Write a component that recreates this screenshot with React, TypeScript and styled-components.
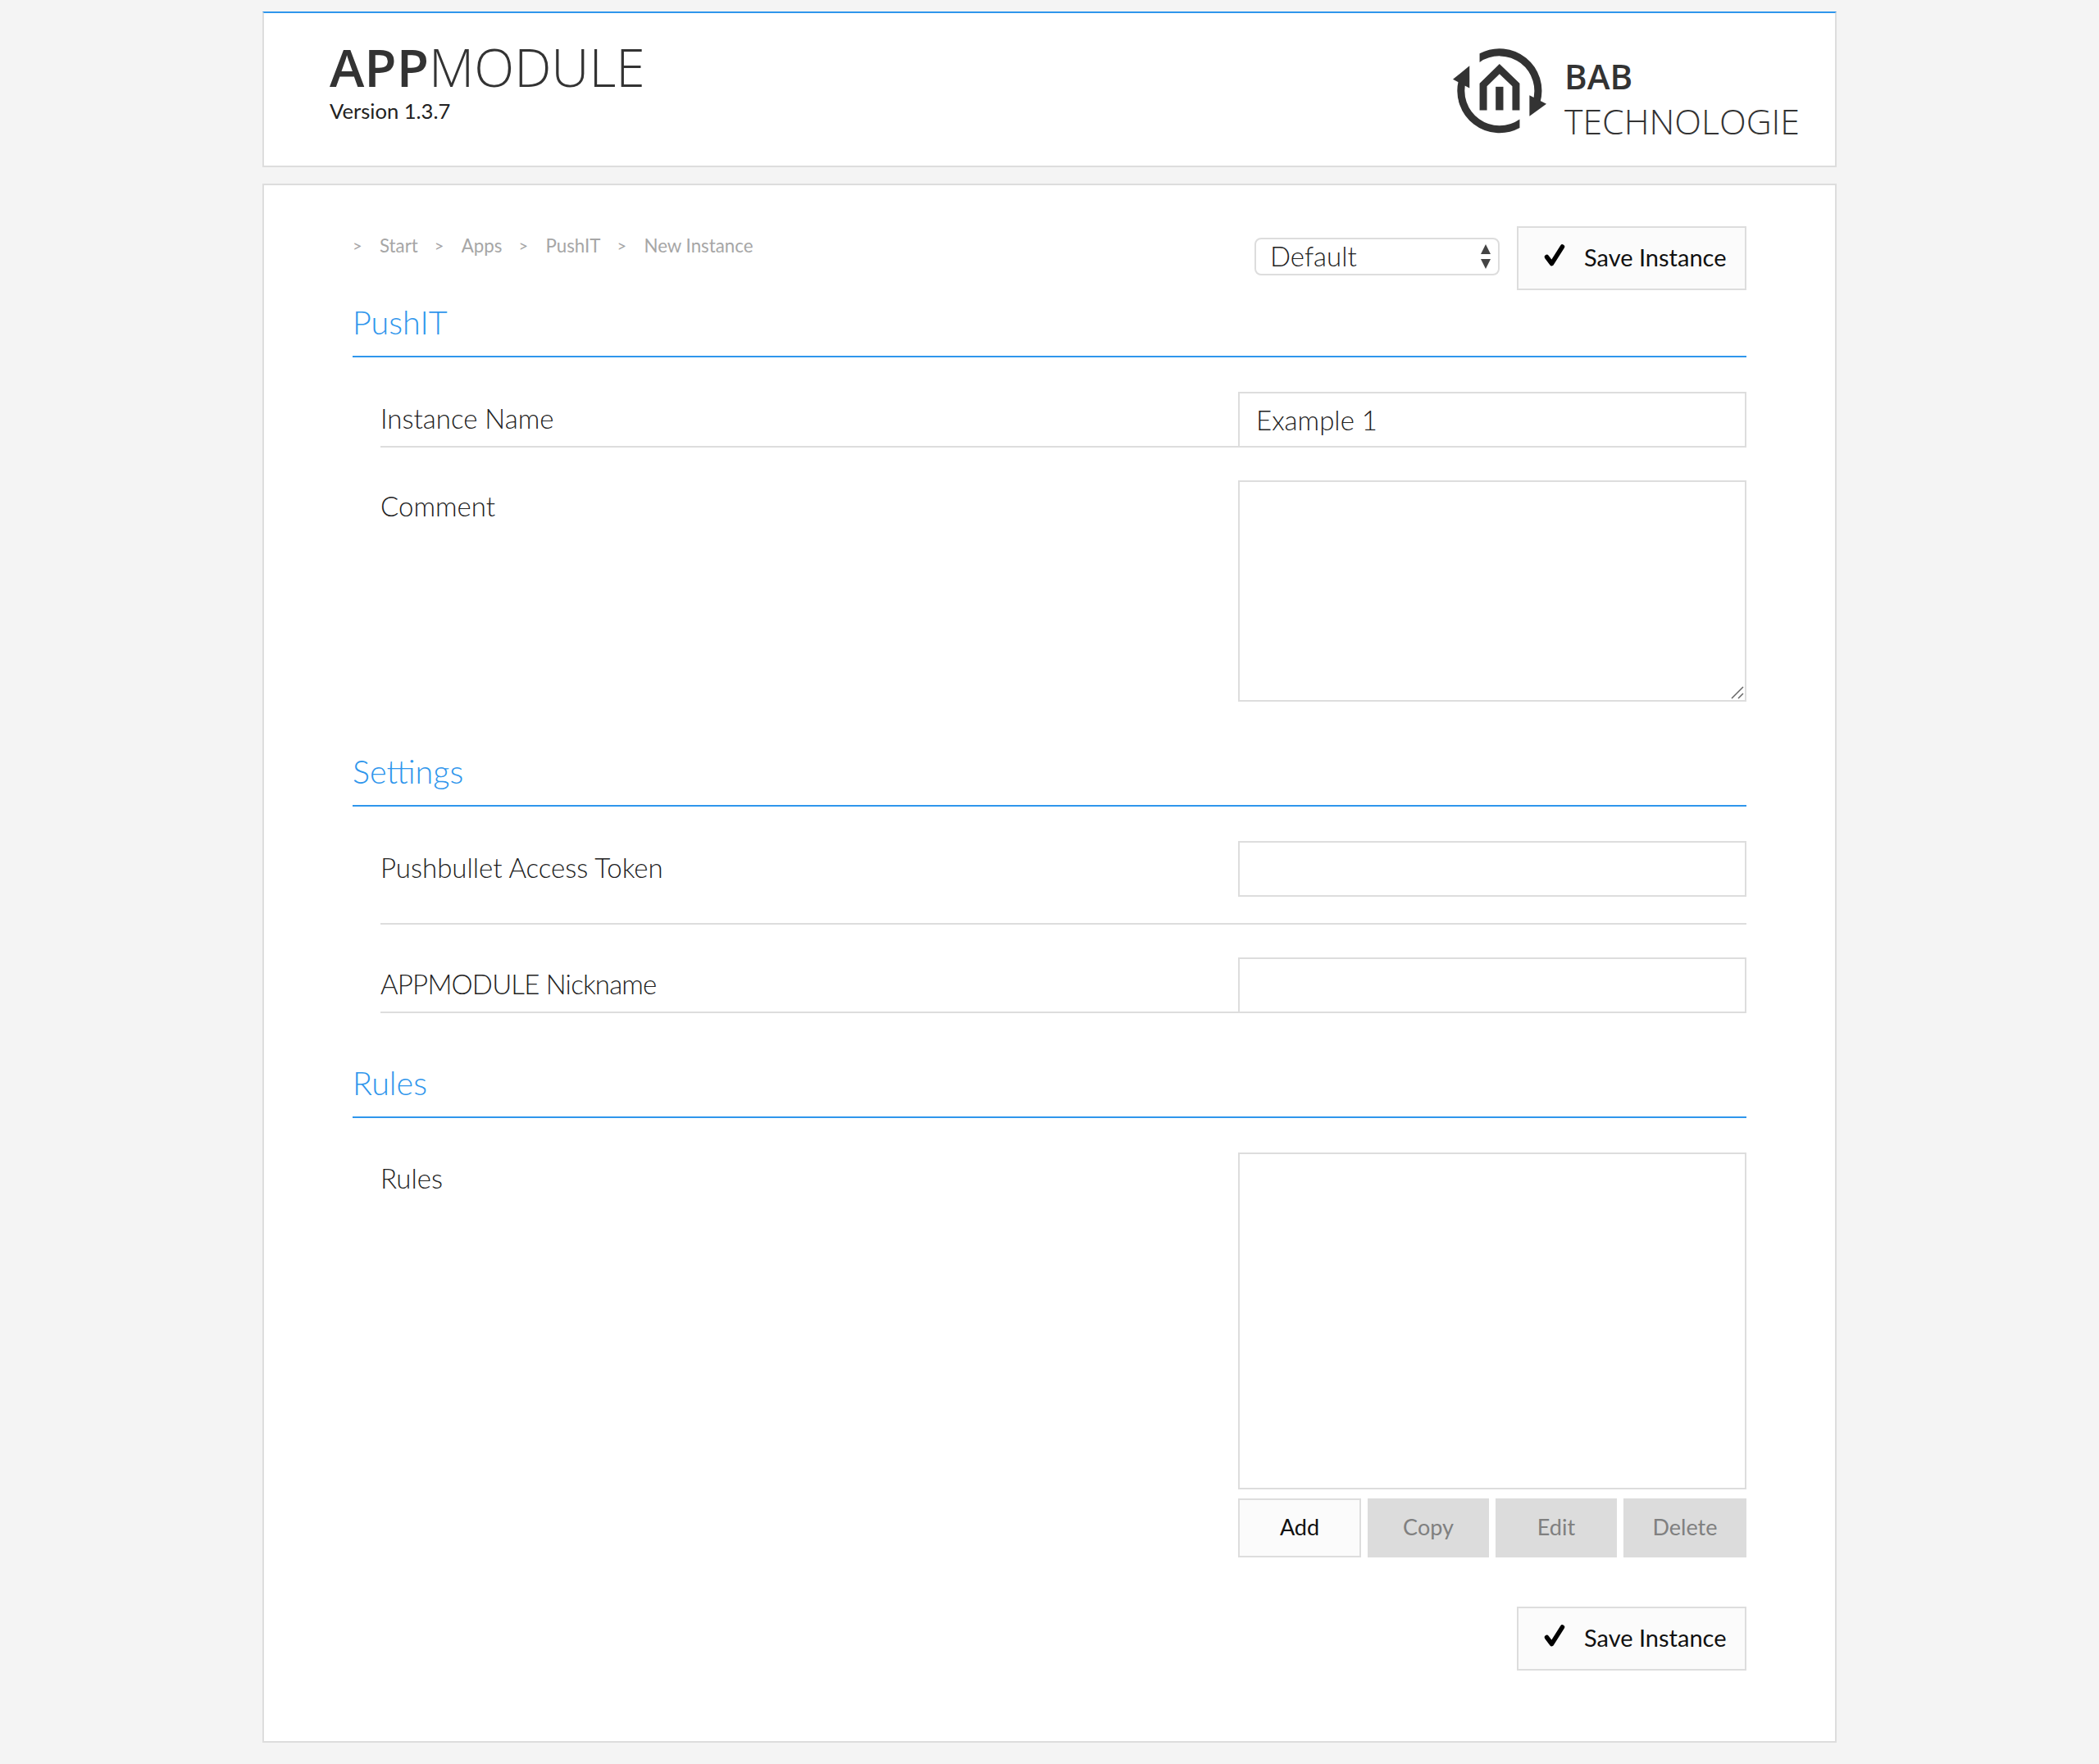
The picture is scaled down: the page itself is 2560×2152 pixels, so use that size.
import React from 'react';
import styled, { createGlobalStyle } from 'styled-components';

const UI_FONT = '"Lato", "Roboto", "Liberation Sans", sans-serif';
const LOGO_FONT = '"Open Sans", "Liberation Sans", sans-serif';
const BLUE = '#2f96ec';
const LINE = '#dddddd';

const GlobalStyle = createGlobalStyle`
  html, body {
    margin: 0;
    padding: 0;
    background: #f4f4f4;
  }
  body {
    font-family: ${UI_FONT};
    font-weight: 300;
    color: #333;
  }
  * {
    box-sizing: border-box;
  }
`;

const Check: React.FC = () => (
  <CheckIcon viewBox="0 0 26 27" aria-hidden="true">
    <path d="M3.5 15.5 L9.5 23.5 L22.5 3" fill="none" stroke="#000" strokeWidth="5.5" strokeLinecap="round" strokeLinejoin="round" />
  </CheckIcon>
);

const Logo: React.FC = () => (
  <LogoMark viewBox="97 87 343 311" aria-hidden="true">
    <path d="M195 105 A155 155 0 0 1 417 285 L388.5 285 A128 128 0 0 0 195 137 Z" />
    <path d="M342 378 A155 155 0 0 1 117.5 205 L145.5 205 A128 128 0 0 0 342 346 Z" />
    <polygon points="158,150 97,200 158,232" />
    <polygon points="378,258 440,290 378,335" />
    <polygon points="268,143 342,215 342,313 315,313 315,225 268,180 222,225 222,313 195,313 195,215" />
    <rect x="254" y="227" width="28" height="86" />
  </LogoMark>
);

const SaveButton: React.FC = () => (
  <SaveBtn type="button">
    <Check />
    <span>Save Instance</span>
  </SaveBtn>
);

const App: React.FC = () => {
  const crumbs = ['Start', 'Apps', 'PushIT', 'New Instance'];

  return (
    <>
      <GlobalStyle />
      <Page>
        <Header>
          <div>
            <Title>
              <b>APP</b>MODULE
            </Title>
            <Version>Version 1.3.7</Version>
          </div>
          <Brand>
            <Logo />
            <BrandText>
              <b>BAB</b>
              <span>TECHNOLOGIE</span>
            </BrandText>
          </Brand>
        </Header>

        <Main>
          <TopBar>
            <Crumbs>
              {crumbs.map((c) => (
                <React.Fragment key={c}>
                  <Sep>&gt;</Sep>
                  <Crumb>{c}</Crumb>
                </React.Fragment>
              ))}
            </Crumbs>
            <TopActions>
              <SelectWrap>
                <Select defaultValue="Default">
                  <option>Default</option>
                </Select>
                <SelectArrows viewBox="0 0 12 30" aria-hidden="true">
                  <polygon points="6,0 12,12 0,12" />
                  <polygon points="0,18 12,18 6,30" />
                </SelectArrows>
              </SelectWrap>
              <SaveButton />
            </TopActions>
          </TopBar>

          <Heading>PushIT</Heading>
          <Row $line>
            <Label>Instance Name</Label>
            <TextInput defaultValue="Example 1" />
          </Row>
          <Row>
            <Label $top>Comment</Label>
            <AreaWrap>
              <TextArea />
              <Grip viewBox="0 0 18 18" aria-hidden="true">
                <path d="M2 16 L16 2 M10 16 L16 10" />
              </Grip>
            </AreaWrap>
          </Row>

          <Heading $spaced>Settings</Heading>
          <Row $line $pad>
            <Label>Pushbullet Access Token</Label>
            <TextInput />
          </Row>
          <Row $line>
            <Label $tight>APPMODULE Nickname</Label>
            <TextInput />
          </Row>

          <Heading $spaced>Rules</Heading>
          <Row>
            <Label $top>Rules</Label>
            <div>
              <RulesList />
              <RuleButtons>
                <RuleBtn type="button">Add</RuleBtn>
                <RuleBtn type="button" $off>Copy</RuleBtn>
                <RuleBtn type="button" $off>Edit</RuleBtn>
                <RuleBtn type="button" $off>Delete</RuleBtn>
              </RuleButtons>
            </div>
          </Row>

          <Footer>
            <SaveButton />
          </Footer>
        </Main>
      </Page>
    </>
  );
};

export default App;

// page
const Page = styled.div`
  width: 1920px;
  margin: 0 auto;
  padding: 14px 0 26px;
`;

// header
const Header = styled.header`
  height: 190px;
  background: #fff;
  border: 2px solid ${LINE};
  border-top-color: ${BLUE};
  display: flex;
  justify-content: space-between;
  padding: 29px 43px 0 80px;
`;

const Title = styled.h1`
  margin: 0;
  font-family: ${LOGO_FONT};
  font-size: 64px;
  font-weight: 300;
  line-height: 74px;
  color: #333;
  b {
    font-weight: 600;
  }
`;

const Version = styled.div`
  font-size: 25.6px;
  font-weight: 400;
  line-height: 32px;
  color: #222;
`;

const Brand = styled.div`
  display: flex;
  align-items: flex-start;
  gap: 22px;
  padding-top: 14px;
`;

const LogoMark = styled.svg`
  width: 114px;
  height: 104px;
  fill: #333;
`;

const BrandText = styled.div`
  font-family: ${LOGO_FONT};
  font-size: 42px;
  line-height: 55px;
  color: #333;
  display: flex;
  flex-direction: column;
  margin-top: 6px;
  b {
    font-weight: 600;
  }
  span {
    font-size: 42.8px;
    font-weight: 300;
  }
`;

// main card
const Main = styled.main`
  margin-top: 20px;
  height: 1902px;
  background: #fff;
  border: 2px solid ${LINE};
  padding: 50px 108px 0;
`;

const TopBar = styled.div`
  display: flex;
  justify-content: space-between;
  align-items: flex-start;
  height: 78px;
`;

const Crumbs = styled.nav`
  display: flex;
  align-items: center;
  height: 32px;
  margin-top: 7px;
  font-size: 22.3px;
  font-weight: 400;
  color: #a6a6a6;
`;

const Sep = styled.span`
  width: 33px;
  font-size: 20px;
`;

const Crumb = styled.span`
  margin-right: 20px;
`;

const TopActions = styled.div`
  display: flex;
  gap: 21px;
  align-items: center;
`;

const SelectWrap = styled.div`
  position: relative;
  width: 299px;
  height: 46px;
  margin-bottom: 4px;
`;

const Select = styled.select`
  appearance: none;
  width: 100%;
  height: 100%;
  background: #fff;
  border: 2px solid ${LINE};
  border-radius: 8px;
  padding: 0 0 5px 17px;
  font: 300 33px ${UI_FONT};
  color: #222;
`;

const SelectArrows = styled.svg`
  position: absolute;
  right: 11px;
  top: 8px;
  width: 12px;
  height: 30px;
  fill: #444;
  pointer-events: none;
`;

const SaveBtn = styled.button`
  width: 280px;
  height: 78px;
  display: flex;
  align-items: center;
  gap: 23px;
  padding: 0 0 4px 31px;
  background: #fbfbfb;
  border: 2px solid ${LINE};
  font: 400 29px ${UI_FONT};
  color: #111;
`;

const CheckIcon = styled.svg`
  width: 26px;
  height: 27px;
  flex: none;
  margin-top: -4px;
`;

// sections
const Heading = styled.h2<{ $spaced?: boolean }>`
  margin: ${(p) => (p.$spaced ? '46px' : '0')} 0 42px;
  height: 82px;
  padding-top: 16px;
  border-bottom: 2px solid ${BLUE};
  font-size: 39.5px;
  font-weight: 300;
  line-height: 46px;
  color: ${BLUE};
`;

const Row = styled.div<{ $line?: boolean; $pad?: boolean }>`
  margin: 0 0 40px 34px;
  display: grid;
  grid-template-columns: 1fr 620px;
  border-bottom: ${(p) => (p.$line ? `2px solid ${LINE}` : 'none')};
  padding-bottom: ${(p) => (p.$pad ? '34px' : '0')};
`;

const Label = styled.label<{ $top?: boolean; $tight?: boolean }>`
  font-size: 33px;
  font-weight: 300;
  line-height: 42px;
  color: #222;
  padding-top: ${(p) => (p.$top ? '10px' : '11px')};
  letter-spacing: ${(p) => (p.$tight ? '-0.8px' : '0')};
`;

const TextInput = styled.input.attrs({ type: 'text' })`
  display: block;
  width: 620px;
  height: 68px;
  margin-bottom: -2px;
  padding: 0 20px;
  background: #fff;
  border: 2px solid ${LINE};
  border-radius: 0;
  outline: none;
  font: 300 33px ${UI_FONT};
  color: #222;
`;

const AreaWrap = styled.div`
  position: relative;
  width: 620px;
  height: 270px;
`;

const TextArea = styled.textarea`
  display: block;
  width: 100%;
  height: 100%;
  resize: none;
  background: #fff;
  border: 2px solid ${LINE};
  border-radius: 0;
  outline: none;
`;

const Grip = styled.svg`
  position: absolute;
  right: 2px;
  bottom: 2px;
  width: 18px;
  height: 18px;
  fill: none;
  stroke: #666;
  stroke-width: 1.5;
  pointer-events: none;
`;

const RulesList = styled.div`
  height: 411px;
  background: #fff;
  border: 2px solid ${LINE};
`;

const RuleButtons = styled.div`
  margin-top: 11px;
  display: grid;
  grid-template-columns: 150px 148px 148px 150px;
  gap: 8px;
`;

const RuleBtn = styled.button<{ $off?: boolean }>`
  height: 72px;
  padding: 0 0 4px;
  background: ${(p) => (p.$off ? '#dcdcdc' : '#fbfbfb')};
  border: ${(p) => (p.$off ? 'none' : `2px solid ${LINE}`)};
  font: 400 27px ${UI_FONT};
  color: ${(p) => (p.$off ? '#808080' : '#111')};
`;

const Footer = styled.div`
  display: flex;
  justify-content: flex-end;
  margin-top: 60px;
`;
